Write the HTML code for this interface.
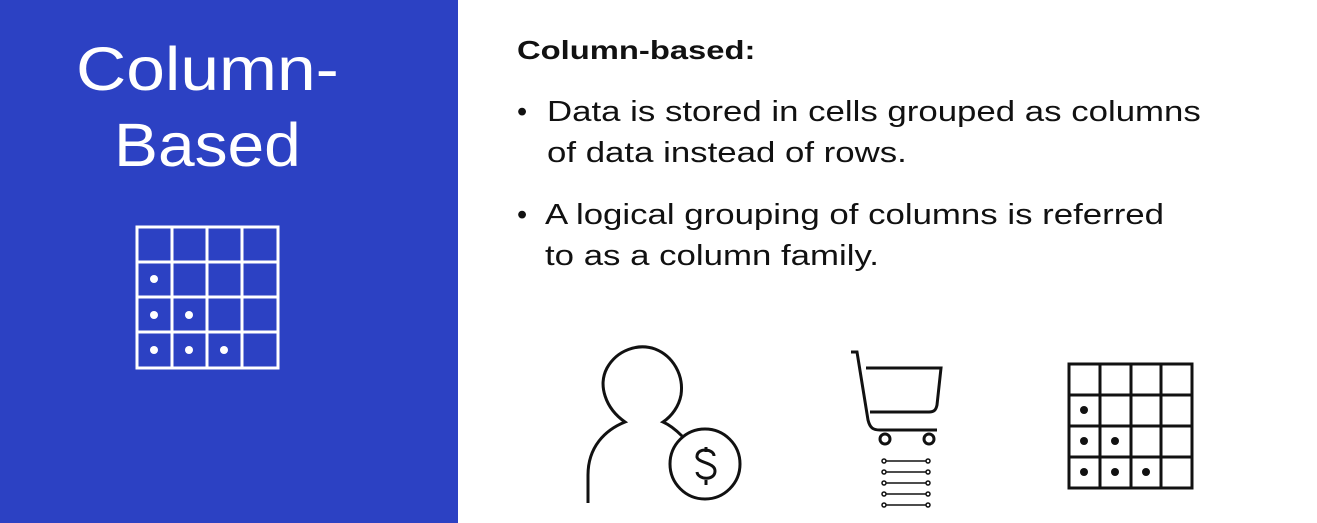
<!DOCTYPE html>
<html><head><style>
body{margin:0;width:1317px;height:523px;overflow:hidden;background:#fff;font-family:"Liberation Sans",sans-serif;position:relative}
.blue{position:absolute;left:0;top:0;width:458px;height:523px;background:#2c41c3}
.t{position:absolute;color:#fff;font-size:61px;line-height:70px;transform:scaleX(1.14);transform-origin:left top;white-space:nowrap}
.r{position:absolute;color:#111;font-size:29px;line-height:41px;transform:scaleX(1.2);transform-origin:left top;white-space:nowrap}
</style></head><body>
<div class="blue"></div>
<div class="t" style="left:76px;top:34px">Column-</div>
<div class="t" style="left:114px;top:110px;transform:scaleX(1.08)">Based</div>
<svg style="position:absolute;left:0;top:0" width="458" height="523">
<g stroke="#fff" stroke-width="3" fill="none">
<rect x="137" y="227" width="141" height="141"/>
<path d="M172 227V368M207 227V368M242 227V368M137 262H278M137 297H278M137 332H278"/>
</g>
<g fill="#fff"><circle cx="154" cy="279" r="4"/><circle cx="154" cy="315" r="4"/><circle cx="189" cy="315" r="4"/><circle cx="154" cy="350" r="4"/><circle cx="189" cy="350" r="4"/><circle cx="224" cy="350" r="4"/></g>
</svg>
<div class="r" style="left:517px;top:30px;font-weight:bold;font-size:26px;transform:scaleX(1.26)">Column-based:</div>
<div class="r" style="left:517px;top:92px;transform:none">•</div>
<div class="r" style="left:547px;top:92px">Data is stored in cells grouped as columns<br>of data instead of rows.</div>
<div class="r" style="left:517px;top:195px;transform:none">•</div>
<div class="r" style="left:545px;top:195px">A logical grouping of columns is referred<br>to as a column family.</div>
<svg style="position:absolute;left:0;top:0" width="1317" height="523">
<g stroke="#111" stroke-width="3" fill="none">
<path d="M588 503V475C588 447 605 430 625 422C605 408 598 385 607 368C617 350 638 343 655 349C673 356 684 375 681 395C679 406 672 416 663 422C670 425 676 430 682 436"/>
<circle cx="705" cy="464" r="35"/>
<path d="M714 456C714 449 698 447 697 456C696 463 715 462 715 471C715 481 698 480 697 472M706 447V452M706 480V485"/>
<path d="M851 352H857L868 420C870 428 873 430 880 430H937"/>
<path d="M866 368H941L937 405C936 410 934 412 929 412H870"/>
<circle cx="885" cy="439" r="5"/><circle cx="929" cy="439" r="5"/>
<rect x="1069" y="364" width="123" height="124"/>
<path d="M1100 364V488M1131 364V488M1161 364V488M1069 395H1192M1069 426H1192M1069 457H1192"/>
</g>
<g stroke="#111" stroke-width="1.5" fill="#fff">
<path d="M884 461H928M884 472H928M884 483H928M884 494H928M884 505H928"/>
<circle cx="884" cy="461" r="2"/><circle cx="928" cy="461" r="2"/>
<circle cx="884" cy="472" r="2"/><circle cx="928" cy="472" r="2"/>
<circle cx="884" cy="483" r="2"/><circle cx="928" cy="483" r="2"/>
<circle cx="884" cy="494" r="2"/><circle cx="928" cy="494" r="2"/>
<circle cx="884" cy="505" r="2"/><circle cx="928" cy="505" r="2"/>
</g>
<g fill="#111"><circle cx="1084" cy="410" r="4"/><circle cx="1084" cy="441" r="4"/><circle cx="1115" cy="441" r="4"/><circle cx="1084" cy="472" r="4"/><circle cx="1115" cy="472" r="4"/><circle cx="1146" cy="472" r="4"/></g>
</svg>
</body></html>
